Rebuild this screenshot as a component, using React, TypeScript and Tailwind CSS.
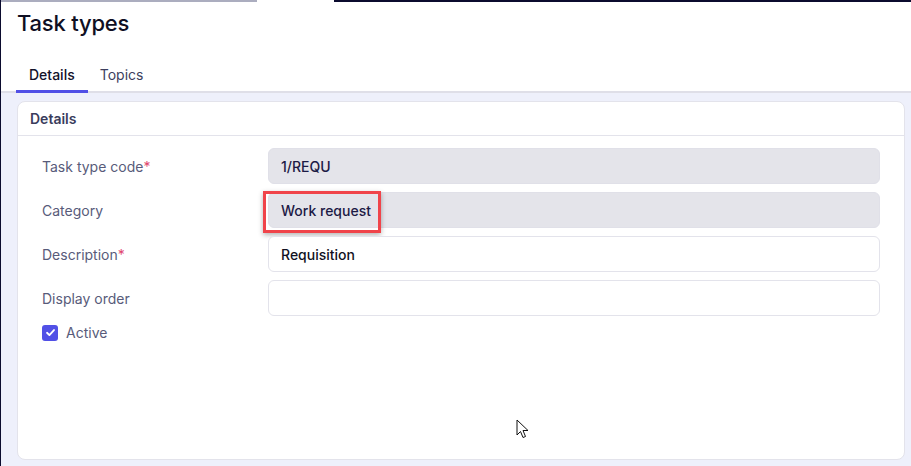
import React from "react";

const rows = [
  { label: "Task type code", required: true, value: "1/REQU", disabled: true },
  { label: "Category", required: false, value: "Work request", disabled: true, highlight: true },
  { label: "Description", required: true, value: "Requisition", disabled: false },
  { label: "Display order", required: false, value: "", disabled: false },
];

const App = () => {
  return (
    <div
      className="relative w-[911px] h-[466px] overflow-hidden bg-white border-l border-[#0b0b2e] flex flex-col"
      style={{ fontFamily: "Inter, 'Noto Sans', sans-serif" }}
    >
      {/* top loading strip */}
      <div className="flex h-[2px] shrink-0">
        <div className="w-[256px] bg-[#abadbf]" />
        <div className="w-[77px] bg-white" />
        <div className="flex-1 bg-[#0b0b2e]" />
      </div>

      <div className="px-[16px] pt-[7px]">
        <h1 className="text-[22px] leading-[28px] font-medium text-[#0f0f23] tracking-[-0.2px]">Task types</h1>
      </div>

      {/* tabs */}
      <div className="mt-[28px] flex border-b-2 border-[#dfdfe8] pl-[15px]">
        <div className="-mb-[2px] px-[13px] pb-[5px] border-b-[3px] border-[#5150e6] text-[14px] leading-[20px] font-medium text-[#12122a]">
          Details
        </div>
        <div className="px-[12px] pb-[5px] text-[14px] leading-[20px] text-[#3d3f5e]">Topics</div>
      </div>

      <div className="flex-1 bg-[#eef0fb] pl-[16px] pr-[6px] pt-[8px] pb-[6px] flex">
        <div className="flex-1 bg-white rounded-lg border border-[#e3e3eb] flex flex-col">
          <div className="h-[34px] px-[12px] flex items-center border-b border-[#e3e3eb] text-[14px] font-semibold text-[#3a3c5c]">
            Details
          </div>
          <div className="px-[24px] pt-[12px] flex flex-col gap-[8px]">
            {rows.map((r) => (
              <div key={r.label} className="flex items-center">
                <div className="w-[226px] text-[14px] text-[#585b7a]">
                  {r.label}
                  {r.required && <span className="text-[#e0466e]">*</span>}
                </div>
                <div className="relative flex-1">
                  <div
                    className={`h-[36px] rounded-md border px-[12px] flex items-center text-[14px] font-medium ${
                      r.disabled
                        ? "bg-[#e4e4ea] border-[#e0e0e8] text-[#1c1a45]"
                        : "bg-white border-[#e3e3eb] text-[#111122]"
                    }`}
                  >
                    {r.value}
                  </div>
                  {r.highlight && (
                    <div className="absolute left-[-5px] top-[-1px] w-[118px] h-[42px] border-[3px] border-[#f0444a] shadow-[0_2px_5px_rgba(0,0,0,0.3)]" />
                  )}
                </div>
              </div>
            ))}
            <div className="flex items-center gap-[8px] -mt-[2px]">
              <div className="w-[16px] h-[16px] rounded-[3px] bg-[#5150e6] flex items-center justify-center">
                <svg width="11" height="11" viewBox="0 0 12 12" fill="none">
                  <path d="M2.2 6.3 L4.8 8.8 L9.8 3.3" stroke="white" strokeWidth="2" strokeLinecap="round" strokeLinejoin="round" />
                </svg>
              </div>
              <span className="text-[14px] text-[#585b7a]">Active</span>
            </div>
          </div>
        </div>
      </div>

      {/* mouse cursor */}
      <svg className="absolute left-[515px] top-[419px]" width="14" height="21" viewBox="0 0 14 21">
        <path
          d="M1 1 L1 16 L4.5 12.5 L7 18.5 L9.5 17.5 L7 11.5 L12 11.5 Z"
          fill="white"
          stroke="#111"
          strokeWidth="1"
          strokeLinejoin="round"
        />
      </svg>
    </div>
  );
};

export default App;
